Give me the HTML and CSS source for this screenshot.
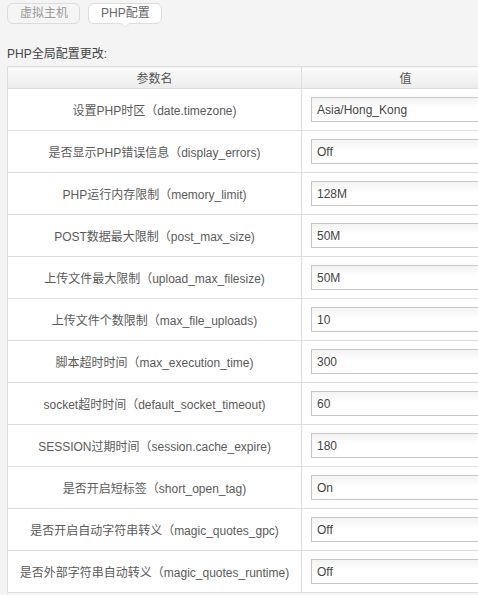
FILE: index.html
```html
<!DOCTYPE html>
<html>
<head>
<meta charset="utf-8">
<link rel="stylesheet" href="styles.css">
</head>
<body>
<div class="page">
  <div class="tabs">
    <span class="tab">虚拟主机</span>
    <span class="tab active">PHP配置</span>
  </div>
  <div class="label">PHP全局配置更改:</div>
  <table class="conf">
    <thead>
      <tr><th class="c1">参数名</th><th class="c2">值</th></tr>
    </thead>
    <tbody>
      <tr><td class="name">设置PHP时区（date.timezone)</td><td class="val"><input class="inp" value="Asia/Hong_Kong"></td></tr>
      <tr><td class="name">是否显示PHP错误信息（display_errors)</td><td class="val"><input class="inp" value="Off"></td></tr>
      <tr><td class="name">PHP运行内存限制（memory_limit)</td><td class="val"><input class="inp" value="128M"></td></tr>
      <tr><td class="name">POST数据最大限制（post_max_size)</td><td class="val"><input class="inp" value="50M"></td></tr>
      <tr><td class="name">上传文件最大限制（upload_max_filesize)</td><td class="val"><input class="inp" value="50M"></td></tr>
      <tr><td class="name">上传文件个数限制（max_file_uploads)</td><td class="val"><input class="inp" value="10"></td></tr>
      <tr><td class="name">脚本超时时间（max_execution_time)</td><td class="val"><input class="inp" value="300"></td></tr>
      <tr><td class="name">socket超时时间（default_socket_timeout)</td><td class="val"><input class="inp" value="60"></td></tr>
      <tr><td class="name">SESSION过期时间（session.cache_expire)</td><td class="val"><input class="inp" value="180"></td></tr>
      <tr><td class="name">是否开启短标签（short_open_tag)</td><td class="val"><input class="inp" value="On"></td></tr>
      <tr><td class="name">是否开启自动字符串转义（magic_quotes_gpc)</td><td class="val"><input class="inp" value="Off"></td></tr>
      <tr><td class="name">是否外部字符串自动转义（magic_quotes_runtime)</td><td class="val"><input class="inp" value="Off"></td></tr>
    </tbody>
  </table>
</div>
</body>
</html>
```
FILE: styles.css
```css
html, body {
  margin: 0;
  padding: 0;
  background: #f4f4f4;
  overflow: hidden;
}
body {
  font-family: "Liberation Sans", "Noto Sans CJK SC", sans-serif;
  font-size: 12px;
  color: #555;
}
.page {
  padding: 3px 0 0 7px;
  width: 560px;
}
.tabs {
  display: flex;
  gap: 8px;
  height: 21px;
}
.tab {
  position: relative;
  box-sizing: border-box;
  height: 21px;
  line-height: 19px;
  padding: 0 11px 0 12px;
  border: 1px solid #dcdcdc;
  border-radius: 6px;
  background: #f5f5f5;
  color: #999;
  font-size: 12px;
}
.tab.active {
  background: #fff;
  color: #666;
}
.tab.active::before,
.tab.active::after {
  content: "";
  position: absolute;
  left: 50%;
  width: 0;
  height: 0;
  border-style: solid;
}
.tab.active::before {
  bottom: -5px;
  margin-left: -5px;
  border-width: 5px 5px 0 5px;
  border-color: #dcdcdc transparent transparent transparent;
}
.tab.active::after {
  bottom: -4px;
  margin-left: -4px;
  border-width: 4px 4px 0 4px;
  border-color: #fff transparent transparent transparent;
}
.label {
  margin-top: 21px;
  height: 21px;
  line-height: 18px;
  color: #444;
  font-size: 12px;
}
.conf {
  border-collapse: collapse;
  background: #fff;
}
.conf th {
  height: 21px;
  padding: 0;
  font-weight: normal;
  font-size: 12px;
  color: #555;
  border: 1px solid #dedede;
  background: linear-gradient(#fbfbfb, #ececec);
}
.conf .c1 { width: 293px; }
.conf .c2 { width: 207px; }
.conf td {
  border: 1px solid #dedede;
  padding: 8px 0 8px 0;
  height: 25px;
}
.conf td.name {
  text-align: center;
  color: #5a5a5a;
  font-size: 12px;
}
.conf td.val {
  padding-left: 9px;
}
.inp {
  display: block;
  box-sizing: border-box;
  width: 195px;
  height: 25px;
  margin: 0;
  padding: 0 0 0 5px;
  border: 1px solid #c6c6c6;
  background: linear-gradient(#f3f3f3, #fff 45%);
  font-family: "Liberation Sans", sans-serif;
  font-size: 12px;
  color: #444;
  outline: none;
}
```
